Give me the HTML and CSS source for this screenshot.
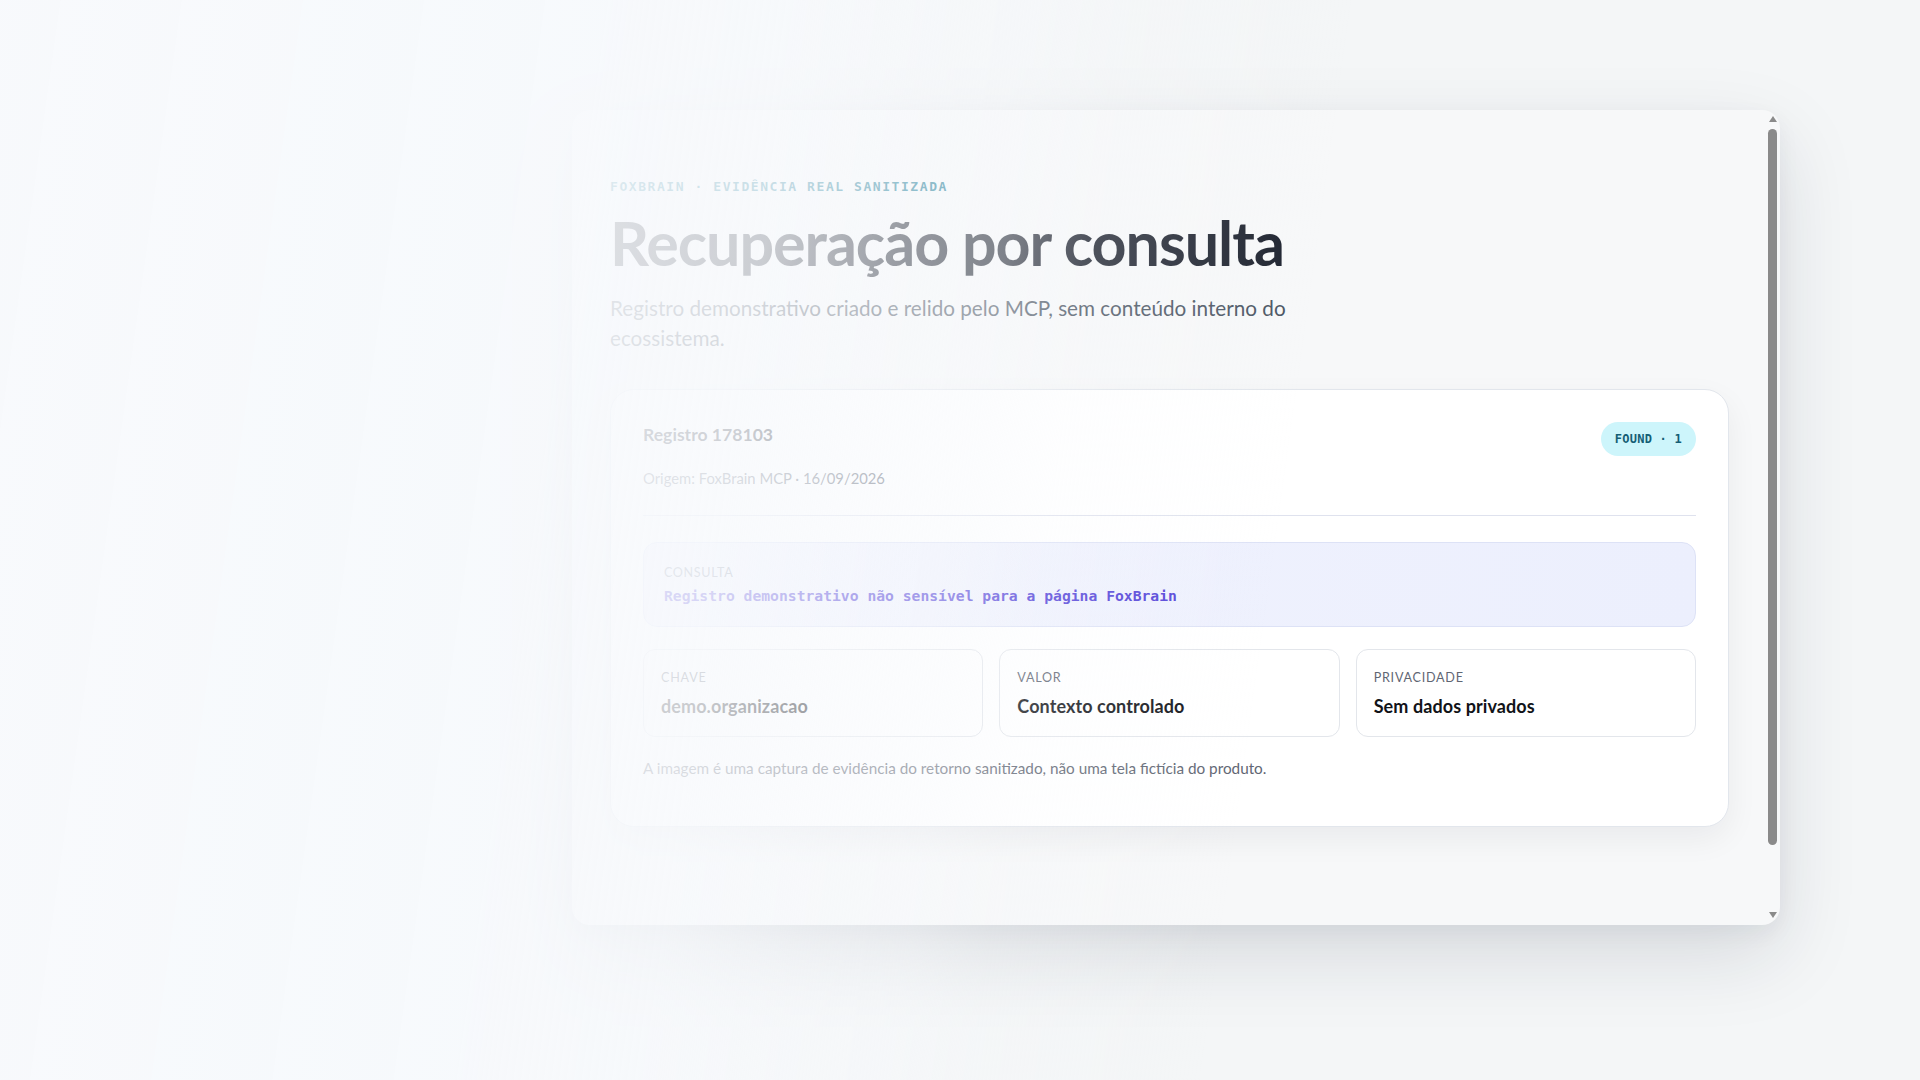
FILE: index.html
```html
<!DOCTYPE html>
<html lang="pt-BR">
<head>
<meta charset="utf-8">
<title>FoxBrain · Recuperação por consulta</title>
<link rel="stylesheet" href="styles.css">
</head>
<body>
<div class="stage">
  <section class="window">
    <div class="window-body">
      <p class="eyebrow">FOXBRAIN · EVIDÊNCIA REAL SANITIZADA</p>
      <h1 class="title">Recuperação por consulta</h1>
      <p class="lead">Registro demonstrativo criado e relido pelo MCP, sem conteúdo interno do ecossistema.</p>
      <article class="card">
        <header class="card-head">
          <div class="card-id">
            <h2 class="card-title">Registro 178103</h2>
            <p class="card-meta">Origem: FoxBrain MCP · 16/09/2026</p>
          </div>
          <span class="badge">FOUND · 1</span>
        </header>
        <div class="query">
          <span class="query-label">CONSULTA</span>
          <code class="query-text">Registro demonstrativo não sensível para a página FoxBrain</code>
        </div>
        <div class="stats">
          <div class="stat">
            <span class="stat-label">CHAVE</span>
            <strong class="stat-value">demo.organizacao</strong>
          </div>
          <div class="stat">
            <span class="stat-label">VALOR</span>
            <strong class="stat-value">Contexto controlado</strong>
          </div>
          <div class="stat">
            <span class="stat-label">PRIVACIDADE</span>
            <strong class="stat-value">Sem dados privados</strong>
          </div>
        </div>
        <p class="note">A imagem é uma captura de evidência do retorno sanitizado, não uma tela fictícia do produto.</p>
      </article>
    </div>
    <div class="scrollbar">
      <span class="arrow arrow-up"></span>
      <span class="thumb"></span>
      <span class="arrow arrow-down"></span>
    </div>
  </section>
</div>
<div class="fade"></div>
</body>
</html>
```

FILE: styles.css
```css
* { box-sizing: border-box; }

html, body {
  margin: 0;
  padding: 0;
  width: 1920px;
  height: 1080px;
  overflow: hidden;
}

body {
  background: #f4f6f7;
  font-family: "Lato", "Noto Sans", sans-serif;
  color: #1e2330;
}

.stage {
  height: 1080px;
  padding: 110px 0 0 572px;
  display: flex;
  align-items: flex-start;
}

.window {
  width: 1208px;
  height: 815px;
  border-radius: 18px;
  background: #f7f8f9;
  box-shadow: 0 30px 80px rgba(22, 32, 52, 0.13), 0 8px 22px rgba(22, 32, 52, 0.05);
  display: flex;
  overflow: hidden;
}

.window-body {
  flex: 1;
  padding: 68px 23px 0 38px;
  display: flex;
  flex-direction: column;
}

.eyebrow {
  margin: 0;
  font-family: "DejaVu Sans Mono", "Liberation Mono", monospace;
  font-weight: 700;
  font-size: 13px;
  line-height: 18px;
  letter-spacing: 0.12em;
  color: #0e7490;
}

.title {
  margin: 14px 0 0;
  font-weight: 700;
  font-size: 61px;
  line-height: 66px;
  letter-spacing: -0.017em;
  color: #1d222e;
}

.lead {
  margin: 17px 0 0;
  max-width: 720px;
  font-size: 20.7px;
  line-height: 30px;
  color: #4b5563;
}

.card {
  margin-top: 36px;
  width: 1119px;
  background: #ffffff;
  border: 1px solid #e2e6ec;
  border-radius: 24px;
  box-shadow: 0 12px 32px rgba(15, 23, 42, 0.06);
  padding: 32px 32px 48px;
}

.card-head {
  display: flex;
  justify-content: space-between;
  align-items: flex-start;
  padding-bottom: 26px;
  border-bottom: 1px solid #dfe2ee;
}

.card-title {
  margin: 0;
  font-size: 17.6px;
  line-height: 26px;
  font-weight: 700;
  color: #2b303c;
}

.card-meta {
  margin: 19px 0 0;
  font-size: 14.8px;
  line-height: 22px;
  color: #6b7280;
}

.badge {
  height: 34px;
  padding: 0 14px;
  display: inline-flex;
  align-items: center;
  border-radius: 17px;
  background: #cdf5fb;
  color: #155e75;
  font-family: "DejaVu Sans Mono", "Liberation Mono", monospace;
  font-weight: 700;
  font-size: 12px;
  letter-spacing: 0.02em;
}

.query {
  margin-top: 26px;
  height: 85px;
  padding: 22px 20px 0;
  border: 1px solid #dde2f6;
  border-radius: 14px;
  background: linear-gradient(90deg, #f1f3fe 0%, #eceffd 100%);
  display: flex;
  flex-direction: column;
}

.query-label {
  font-size: 12.6px;
  line-height: 16px;
  letter-spacing: 0.05em;
  color: #8b93a5;
}

.query-text {
  margin-top: 4px;
  font-family: "DejaVu Sans Mono", "Liberation Mono", monospace;
  font-weight: 700;
  font-size: 14.7px;
  line-height: 22px;
  letter-spacing: 0;
  color: #5140d8;
}

.stats {
  margin-top: 22px;
  display: grid;
  grid-template-columns: repeat(3, 1fr);
  gap: 16px;
}

.stat {
  height: 88px;
  padding: 20px 17px 0;
  border: 1px solid #e3e6eb;
  border-radius: 12px;
  background: #ffffff;
  display: flex;
  flex-direction: column;
}

.stat-label {
  font-size: 12.6px;
  line-height: 16px;
  letter-spacing: 0.06em;
  color: #5f6673;
}

.stat-value {
  margin-top: 8px;
  font-size: 18px;
  line-height: 24px;
  font-weight: 700;
  letter-spacing: 0.005em;
  color: #111318;
}

.note {
  margin: 21px 0 0;
  font-size: 15.3px;
  line-height: 20px;
  color: #5f6673;
}

.scrollbar {
  width: 15px;
  flex: none;
  display: flex;
  flex-direction: column;
  align-items: center;
  padding: 6px 0 7px;
}

.arrow {
  width: 0;
  height: 0;
  border-left: 4px solid transparent;
  border-right: 4px solid transparent;
}

.arrow-up {
  border-bottom: 6px solid #8a8a8a;
}

.arrow-down {
  border-top: 6px solid #8a8a8a;
}

.thumb {
  width: 9px;
  height: 716px;
  margin: 7px 0 auto;
  border-radius: 5px;
  background: #8a8a8a;
}

.fade {
  position: fixed;
  inset: 0;
  pointer-events: none;
  background: linear-gradient(98deg,
    rgba(247, 249, 252, 0.93) 0px,
    rgba(247, 249, 252, 0.91) 600px,
    rgba(247, 249, 252, 0.88) 640px,
    rgba(247, 249, 252, 0.8) 790px,
    rgba(247, 249, 252, 0.58) 920px,
    rgba(247, 249, 252, 0.45) 1030px,
    rgba(247, 249, 252, 0.23) 1110px,
    rgba(247, 249, 252, 0.05) 1290px,
    rgba(247, 249, 252, 0) 1340px);
}
```
